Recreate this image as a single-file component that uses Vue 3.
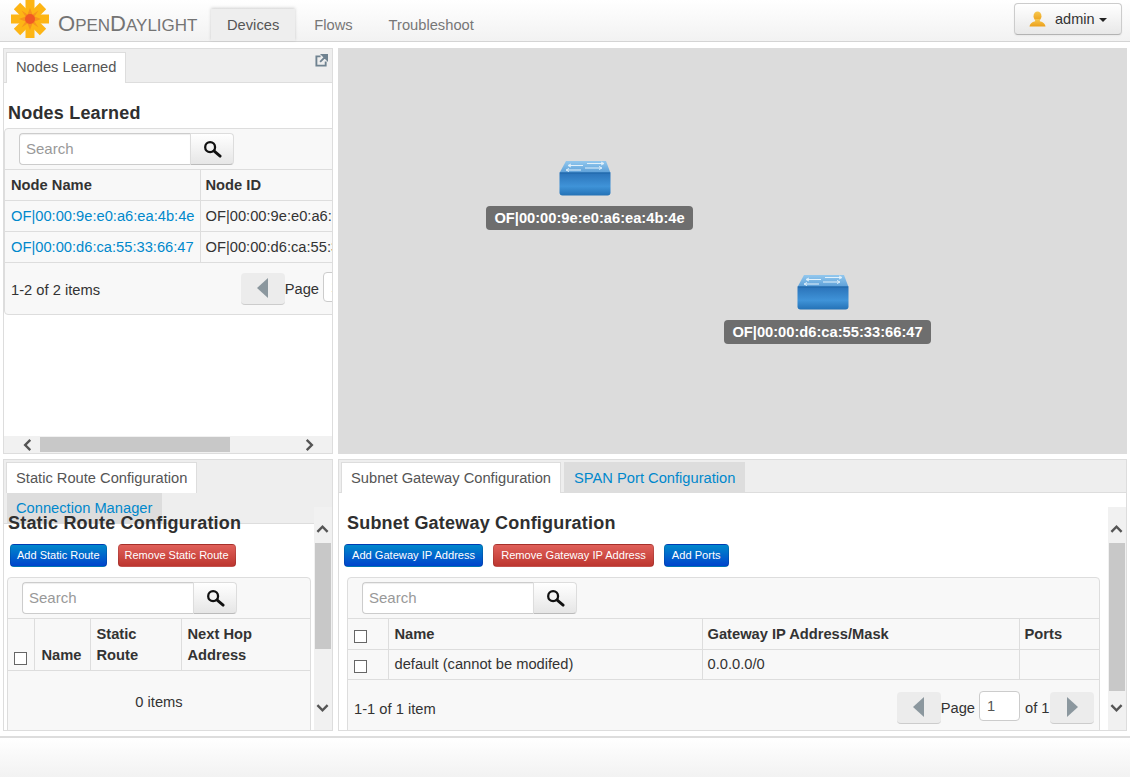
<template>
  <div class="page">
    <svg class="defs" width="0" height="0">
      <defs>
        <linearGradient id="swFront" x1="0" y1="0" x2="0" y2="1">
          <stop offset="0" stop-color="#2a72b8" />
          <stop offset="0.6" stop-color="#3f93d8" />
          <stop offset="1" stop-color="#2472b6" />
        </linearGradient>
        <linearGradient id="swTop" x1="0" y1="0" x2="0" y2="1">
          <stop offset="0" stop-color="#93c8ee" />
          <stop offset="1" stop-color="#5c9fd8" />
        </linearGradient>
        <linearGradient id="userFill" x1="0" y1="0" x2="0" y2="1">
          <stop offset="0" stop-color="#f7c84f" />
          <stop offset="1" stop-color="#eb9f1a" />
        </linearGradient>
        <symbol id="search" viewBox="0 0 20 20">
          <circle cx="7.5" cy="7.5" r="5.2" fill="none" stroke="#111" stroke-width="2.4" />
          <path d="M11.5 11.5L18 17" stroke="#111" stroke-width="3" stroke-linecap="round" />
        </symbol>
        <symbol id="switch" viewBox="0 0 52 36">
          <path d="M7 1H47L51.5 13H.5Z" fill="url(#swTop)" />
          <path d="M.5 12.500H51.5V32.500Q51.5 35.500 48.500 35.500H3.500Q.5 35.500 .5 32.500Z" fill="url(#swFront)" />
          <path d="M1 13H51" stroke="#1f66a8" stroke-width="1" />
          <path d="M10 5.500H24M28 3.500H44M8 10H22M26 8H42" stroke="#e2f1fb" stroke-width="1" fill="none" />
          <path d="M12 4L9 5.500L12 7M42 2L45 3.500L42 5M10 8.500L7 10L10 11.500M40 6.500L43 8L40 9.500" stroke="#e2f1fb" stroke-width="1" fill="none" />
        </symbol>
        <symbol id="chev" viewBox="0 0 14 10">
          <path d="M1.500 8L7 2.500L12.500 8" fill="none" stroke="#555" stroke-width="2.600" />
        </symbol>
      </defs>
    </svg>

    <header class="topbar">
      <svg class="logo" viewBox="0 0 38 38">
        <g stroke="#fdb515" stroke-width="9">
          <path d="M19 0V38M0 19H38" />
          <path d="M6 6L32 32M32 6L6 32" />
        </g>
        <path d="M19 8L21.500 14.500L27.500 10.500L23.500 16.500L30 19L23.500 21.500L27.500 27.500L21.500 23.500L19 30L16.500 23.500L10.500 27.500L14.500 21.500L8 19L14.500 16.500L10.500 10.500L16.500 14.500Z" fill="#f7941d" />
        <circle cx="19" cy="19" r="5" fill="#f15a24" />
      </svg>
      <div class="brand"><span class="cap">O</span>PEN<span class="cap">D</span>AYLIGHT</div>
      <nav class="nav">
        <a v-for="item in navItems" :key="item" class="nav-item" :class="{ active: item === 'Devices' }">{{ item }}</a>
      </nav>
      <button class="user-btn">
        <svg class="user-icon" viewBox="0 0 18 16">
          <ellipse cx="9" cy="5" rx="4.200" ry="5" fill="url(#userFill)" />
          <path d="M.5 16Q1 12 6.500 10.500V8H11.500V10.500Q17 12 17.500 16Z" fill="url(#userFill)" />
        </svg>
        admin
        <span class="caret"></span>
      </button>
    </header>

    <main class="layout">
      <!-- Nodes learned -->
      <section class="panel">
        <div class="tabs first-tabs">
          <a class="tab active">Nodes Learned</a>
          <svg class="popout" viewBox="0 0 14 14">
            <path d="M6 2.500H1.500V12.500H11.500V8" fill="none" stroke="#6f8290" stroke-width="2" />
            <path d="M5.500 8.500L11 3M7.800 1H13V6.200Z" stroke="#6f8290" stroke-width="2" fill="#6f8290" />
          </svg>
        </div>
        <div class="nodes-body">
          <h2 class="title nodes-title">Nodes Learned</h2>
          <div class="box nodes-box">
            <div class="toolbar">
              <input class="search" placeholder="Search" />
              <button class="search-btn"><svg class="search-icon"><use href="#search" /></svg></button>
            </div>
            <table class="tbl nodes-tbl">
              <colgroup><col style="width: 195px" /><col /></colgroup>
              <tr>
                <th>Node Name</th>
                <th>Node ID</th>
              </tr>
              <tr v-for="node in nodes" :key="node">
                <td><a class="link">{{ node }}</a></td>
                <td>{{ node }}</td>
              </tr>
            </table>
            <div class="pager-row">
              <span class="count">1-2 of 2 items</span>
              <div class="pager">
                <button class="page-btn"><span class="tri-left"></span></button>
                <span class="page-label">Page</span>
                <input class="page-input" value="1" />
                <span class="page-of">of 1</span>
                <button class="page-btn"><span class="tri-right"></span></button>
              </div>
            </div>
          </div>
        </div>
        <div class="hscroll">
          <svg class="chev chev-left"><use href="#chev" /></svg>
          <div class="hthumb"></div>
          <svg class="chev chev-right"><use href="#chev" /></svg>
        </div>
      </section>

      <!-- Topology canvas -->
      <section class="canvas">
        <div v-for="node in canvasNodes" :key="node.name" class="node" :style="{ left: node.x + 'px', top: node.y + 'px' }">
          <svg class="switch"><use href="#switch" /></svg>
          <div class="node-label">{{ node.name }}</div>
        </div>
      </section>

      <!-- Static routes -->
      <section class="panel">
        <div class="tabs wrapped">
          <a class="tab active">Static Route Configuration</a>
          <a class="tab second">Connection Manager</a>
        </div>
        <div class="config-body">
          <div class="config-main static-main">
            <h2 class="title static-title">Static Route Configuration</h2>
            <div class="actions static-actions">
              <button class="btn blue">Add Static Route</button>
              <button class="btn red">Remove Static Route</button>
            </div>
            <div class="box static-box">
              <div class="toolbar">
                <input class="search" placeholder="Search" />
                <button class="search-btn"><svg class="search-icon"><use href="#search" /></svg></button>
              </div>
              <table class="tbl tall">
                <colgroup><col style="width: 26px" /><col style="width: 56px" /><col style="width: 91px" /><col /></colgroup>
                <tr>
                  <th><span class="check"></span></th>
                  <th>Name</th>
                  <th>Static Route</th>
                  <th>Next Hop Address</th>
                </tr>
                <tr>
                  <td colspan="4" class="empty">0 items</td>
                </tr>
              </table>
            </div>
          </div>
          <div class="vscroll">
            <svg class="chev"><use href="#chev" /></svg>
            <div class="vthumb static-thumb"></div>
            <svg class="chev chev-down"><use href="#chev" /></svg>
          </div>
        </div>
      </section>

      <!-- Subnet gateways -->
      <section class="panel">
        <div class="tabs lower">
          <a class="tab active">Subnet Gateway Configuration</a>
          <a class="tab second">SPAN Port Configuration</a>
        </div>
        <div class="config-body">
          <div class="config-main subnet-main">
            <h2 class="title">Subnet Gateway Configuration</h2>
            <div class="actions subnet-actions">
              <button class="btn blue">Add Gateway IP Address</button>
              <button class="btn red">Remove Gateway IP Address</button>
              <button class="btn blue">Add Ports</button>
            </div>
            <div class="box subnet-box">
              <div class="toolbar">
                <input class="search" placeholder="Search" />
                <button class="search-btn"><svg class="search-icon"><use href="#search" /></svg></button>
              </div>
              <table class="tbl subnet-tbl">
                <colgroup><col style="width: 40px" /><col style="width: 314px" /><col style="width: 317px" /><col /></colgroup>
                <tr>
                  <th><span class="check"></span></th>
                  <th>Name</th>
                  <th>Gateway IP Address/Mask</th>
                  <th>Ports</th>
                </tr>
                <tr>
                  <td><span class="check"></span></td>
                  <td>default (cannot be modifed)</td>
                  <td>0.0.0.0/0</td>
                  <td></td>
                </tr>
              </table>
              <div class="pager-row subnet-pager">
                <span class="count">1-1 of 1 item</span>
                <div class="pager">
                  <button class="page-btn"><span class="tri-left"></span></button>
                  <span class="page-label">Page</span>
                  <input class="page-input" value="1" />
                  <span class="page-of">of 1</span>
                  <button class="page-btn"><span class="tri-right"></span></button>
                </div>
              </div>
            </div>
          </div>
          <div class="vscroll">
            <svg class="chev"><use href="#chev" /></svg>
            <div class="vthumb subnet-thumb"></div>
            <svg class="chev chev-down"><use href="#chev" /></svg>
          </div>
        </div>
      </section>
    </main>

    <footer class="footer"></footer>
  </div>
</template>

<script setup>
const navItems = ['Devices', 'Flows', 'Troubleshoot']

const nodes = ['OF|00:00:9e:e0:a6:ea:4b:4e', 'OF|00:00:d6:ca:55:33:66:47']

// node positions on the topology canvas
const canvasNodes = [
  { name: 'OF|00:00:9e:e0:a6:ea:4b:4e', x: 148, y: 112 },
  { name: 'OF|00:00:d6:ca:55:33:66:47', x: 386, y: 226 }
]
</script>

<style>
html,
body {
  margin: 0;
  background: #fff;
}
</style>

<style scoped>
.page {
  width: 1130px;
  height: 777px;
  overflow: hidden;
  display: flex;
  flex-direction: column;
  font-family: 'Liberation Sans', Arial, sans-serif;
  font-size: 14.7px;
  color: #333;
  background: #fff;
}

.defs {
  position: absolute;
}

/* Header */
.topbar {
  height: 41px;
  flex: none;
  display: flex;
  align-items: flex-end;
  border-bottom: 1px solid #d4d4d4;
  background: linear-gradient(#fff, #f2f2f2);
}

.logo {
  width: 38px;
  height: 38px;
  margin: 0 9px 3px 11px;
}

.brand {
  width: 153px;
  height: 32px;
  line-height: 29px;
  font-size: 17px;
  color: #747474;
  white-space: nowrap;
}

.cap {
  font-size: 22px;
}

.nav {
  display: flex;
  height: 32px;
}

.nav-item {
  padding: 0 18px;
  line-height: 33px;
  color: #777;
}

.nav-item.active {
  padding: 0 16px;
  margin-right: 1px;
  color: #555;
  background: #eee;
  box-shadow: 0 -1px 3px rgba(0, 0, 0, 0.18);
}

.user-btn {
  margin: 0 8px 6px auto;
  width: 108px;
  height: 32px;
  display: flex;
  align-items: center;
  padding: 0 0 0 14px;
  font: inherit;
  font-size: 14.5px;
  color: #333;
  border: 1px solid #ccc;
  border-bottom-color: #b3b3b3;
  border-radius: 4px;
  background: linear-gradient(#fff, #e8e8e8);
  box-shadow: 0 1px 2px rgba(0, 0, 0, 0.05);
}

.user-icon {
  width: 17px;
  height: 16px;
  margin-right: 9px;
}

.caret {
  margin: 1px 0 0 4px;
  border-top: 4px solid #222;
  border-left: 4px solid transparent;
  border-right: 4px solid transparent;
}

/* Grid */
.layout {
  flex: none;
  display: grid;
  grid-template-columns: 330px 789px;
  grid-template-rows: 406px 272px;
  gap: 5px;
  padding: 6px 0 0 3px;
}

.panel {
  position: relative;
  display: flex;
  flex-direction: column;
  overflow: hidden;
  border: 1px solid #ddd;
  background: #fff;
  box-sizing: border-box;
}

.tabs {
  flex: none;
  display: flex;
  flex-wrap: wrap;
  padding: 2px 0 0 2px;
  box-sizing: border-box;
  background: #eee;
  border-bottom: 1px solid #ddd;
  position: relative;
}

.first-tabs {
  padding-top: 3px;
  height: 34px;
}

.lower {
  height: 33px;
}

.tabs.wrapped {
  height: 64px;
  margin-bottom: -31px;
}

.tab {
  height: 31px;
  line-height: 31px;
  padding: 0 9px;
  margin-bottom: -1px;
  margin-right: 3px;
  box-sizing: border-box;
  white-space: nowrap;
}

.tab.active {
  color: #555;
  line-height: 29px;
  background: #fff;
  border: 1px solid #ddd;
  border-bottom: 0;
}

.lower .tab.active,
.wrapped .tab.active {
  line-height: 31px;
}

.tab.second {
  color: #0088cc;
  background: #ddd;
  padding: 0 10px;
  height: 30px;
  line-height: 32px;
}

.wrapped .tab.second {
  margin-left: 1px;
  padding: 0 10px 0 9px;
  line-height: 31px;
}

.popout {
  position: absolute;
  top: 5px;
  right: 4px;
  width: 13px;
  height: 13px;
}

.title {
  margin: 0;
  font-size: 18px;
  line-height: 20px;
  font-weight: bold;
  letter-spacing: 0.2px;
  color: #2f2f2f;
  white-space: nowrap;
}

.nodes-body {
  flex: 1;
  min-height: 0;
  overflow: hidden;
}

.nodes-title {
  margin: 20px 0 5px 4px;
}

.nodes-box {
  width: 440px;
  border-radius: 4px 0 0 4px;
}

/* Table box */
.box {
  border: 1px solid #ddd;
  background: #f8f8f8;
  box-sizing: border-box;
}

.toolbar {
  display: flex;
  height: 41px;
  padding: 4px 0 0 14px;
  box-sizing: border-box;
  border-bottom: 1px solid #ddd;
}

.search {
  width: 171px;
  height: 32px;
  box-sizing: border-box;
  padding: 0 6px 2px;
  font: inherit;
  font-size: 15px;
  color: #333;
  border: 1px solid #ccc;
  border-right: 0;
  border-radius: 4px 0 0 4px;
  background: #fff;
  box-shadow: inset 0 1px 1px rgba(0, 0, 0, 0.07);
}

.search::placeholder {
  color: #999;
}

.search-btn {
  width: 44px;
  height: 32px;
  padding: 0;
  display: flex;
  align-items: center;
  justify-content: center;
  border: 1px solid #ddd;
  border-bottom-color: #bbb;
  border-radius: 0 4px 4px 0;
  background: linear-gradient(#fff, #e6e6e6);
}

.search-icon {
  width: 19px;
  height: 19px;
}

.tbl {
  width: 100%;
  table-layout: fixed;
  border-collapse: collapse;
}

.tbl th,
.tbl td {
  padding: 0 5px;
  height: 30px;
  text-align: left;
  border-left: 1px solid #ddd;
  border-bottom: 1px solid #ddd;
  box-sizing: border-box;
  white-space: nowrap;
  overflow: hidden;
}

.tbl th:first-child,
.tbl td:first-child {
  border-left: 0;
}

.nodes-tbl {
  margin-bottom: -1px;
}

.nodes-tbl td {
  height: 31px;
}

.nodes-tbl th:first-child,
.nodes-tbl td:first-child {
  padding-left: 6px;
}

.subnet-tbl th:nth-child(2),
.subnet-tbl td:nth-child(2) {
  padding-left: 6px;
}

.tall th {
  white-space: normal;
  vertical-align: bottom;
  height: 51px;
  line-height: 21px;
  padding-bottom: 4px;
}

.tall th:nth-child(2) {
  padding-left: 7px;
}

.tall th:nth-child(3),
.tall th:nth-child(4) {
  padding-left: 6px;
}

.tbl .empty {
  height: 62px;
  padding-top: 2px;
  text-align: center;
  border-bottom: 0;
}

.link {
  color: #0088cc;
}

.check {
  display: inline-block;
  width: 13px;
  height: 13px;
  box-sizing: border-box;
  border: 1px solid #666;
  background: #fff;
  vertical-align: -5px;
  margin-left: 1px;
}

.pager-row {
  display: flex;
  align-items: flex-start;
  justify-content: space-between;
  height: 52px;
  padding: 11px 5px 0 6px;
  box-sizing: border-box;
}

.subnet-pager {
  padding-top: 12px;
}

.count {
  line-height: 34px;
}

.pager {
  display: flex;
  align-items: center;
}

.page-btn {
  width: 44px;
  height: 32px;
  padding: 0;
  display: flex;
  align-items: center;
  justify-content: center;
  border: 0;
  border-bottom: 1px solid #ccc;
  border-radius: 4px;
  background: #ececec;
}

.tri-left,
.tri-right {
  border-top: 10px solid transparent;
  border-bottom: 10px solid transparent;
}

.tri-left {
  border-right: 11px solid #8b979e;
}

.tri-right {
  border-left: 11px solid #8b979e;
}

.page-label {
  margin: 0 4px 0 0;
}

.page-input {
  width: 41px;
  height: 30px;
  margin: -3px 5px 0 0;
  padding: 0 7px 1px;
  box-sizing: border-box;
  font: inherit;
  color: #555;
  border: 1px solid #ccc;
  border-radius: 4px;
}

.page-of {
  width: 25px;
  white-space: nowrap;
}

/* Scrollbars */
.hscroll {
  flex: none;
  height: 17px;
  display: flex;
  align-items: center;
  background: #f1f1f1;
  position: relative;
}

.hthumb {
  position: absolute;
  left: 36px;
  top: 1px;
  width: 190px;
  height: 15px;
  background: #c8c8c8;
}

.chev {
  width: 13px;
  height: 10px;
  display: block;
}

.chev-left {
  position: absolute;
  left: 17px;
  top: 4px;
  transform: rotate(-90deg);
}

.chev-right {
  position: absolute;
  left: 299px;
  top: 4px;
  transform: rotate(90deg);
}

.chev-down {
  transform: rotate(180deg);
}

.config-body {
  flex: 1;
  min-height: 0;
  display: flex;
  position: relative;
}

.config-main {
  flex: 1;
  min-width: 0;
  overflow: hidden;
  padding-top: 20px;
  box-sizing: border-box;
}

.static-main {
  padding-left: 3px;
}

.static-title {
  margin-left: 1px;
}

.subnet-main {
  padding-left: 8px;
}

.actions {
  display: flex;
  margin-top: 11px;
  margin-bottom: 10px;
}

.static-actions {
  gap: 11px;
  margin-left: 3px;
}

.subnet-actions {
  gap: 10px;
  margin-left: -3px;
}

.btn {
  height: 23px;
  padding: 0 6px;
  font: inherit;
  font-size: 11px;
  line-height: 21px;
  color: #fff;
  border: 1px solid rgba(0, 0, 0, 0.12);
  border-radius: 4px;
  white-space: nowrap;
}

.subnet-actions .btn {
  padding: 0 7px;
  font-size: 11.1px;
}

.btn.blue {
  background: linear-gradient(#0088cc, #0044cc);
}

.btn.red {
  background: linear-gradient(#e0605a, #bd362f);
}

.static-box {
  width: 304px;
  border-radius: 4px 4px 0 0;
}

.subnet-box {
  width: 753px;
  border-radius: 4px 4px 0 0;
}

.vscroll {
  flex: none;
  width: 18px;
  margin-top: 14px;
  margin-left: 1px;
  background: #f1f1f1;
  position: relative;
}

.vscroll .chev {
  position: absolute;
  left: 2px;
  top: 17px;
}

.vscroll .chev-down {
  top: auto;
  bottom: 17px;
}

.vthumb {
  position: absolute;
  left: 1px;
  top: 36px;
  width: 16px;
  background: #c8c8c8;
}

.static-thumb {
  height: 106px;
}

.subnet-thumb {
  height: 148px;
}

/* Canvas */
.canvas {
  position: relative;
  background: #dcdcdc;
  overflow: hidden;
}

.node {
  position: absolute;
  width: 207px;
  display: flex;
  flex-direction: column;
}

.switch {
  width: 52px;
  height: 36px;
  margin: 0 0 10px 73px;
}

.node-label {
  width: 100%;
  height: 24px;
  line-height: 24px;
  border-radius: 4px;
  text-align: center;
  font-weight: bold;
  color: #fff;
  background: #6e6e6e;
}

/* Footer */
.footer {
  margin-top: 5px;
  height: 41px;
  flex: none;
  box-sizing: border-box;
  border-top: 2px solid #ddd;
  background: linear-gradient(#fff, #f2f2f2);
}
</style>
